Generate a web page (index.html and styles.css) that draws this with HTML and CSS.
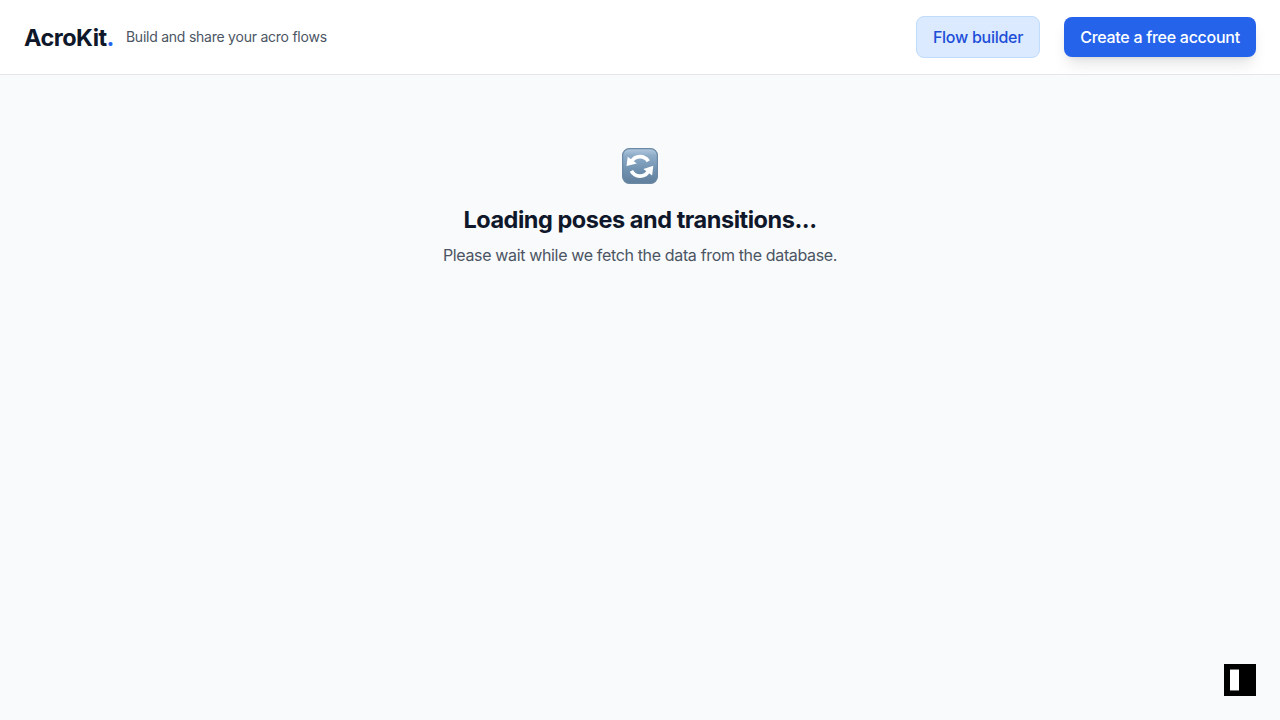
FILE: index.html
```html
<!DOCTYPE html>
<html lang="en">
<head>
<meta charset="utf-8">
<title>AcroKit</title>
<link rel="stylesheet" href="styles.css">
</head>
<body>
<header class="header">
  <div class="brand">
    <a class="logo">AcroKit<span class="logo-dot">.</span></a>
    <span class="tagline">Build and share your acro flows</span>
  </div>
  <nav class="actions">
    <a class="button button-soft"><span class="soft-label">Flow builder</span></a>
    <a class="button button-primary"><span class="primary-label">Create a free account</span></a>
  </nav>
</header>
<main class="loading">
  <svg class="refresh" viewBox="0 0 36 36" aria-hidden="true">
    <defs>
      <linearGradient id="tile" x1="0" y1="0" x2="0" y2="1">
        <stop offset="0" stop-color="#b2cae0"/>
        <stop offset=".2" stop-color="#8eacc8"/>
        <stop offset=".6" stop-color="#7192b0"/>
        <stop offset="1" stop-color="#617f9c"/>
      </linearGradient>
    </defs>
    <rect x=".6" y=".6" width="34.8" height="34.8" rx="6.8" fill="url(#tile)" stroke="#6b88a4" stroke-width="1.2"/>
    <path d="M9.5 13.6A9.7 9.7 0 0 1 26.3 13.2M26.5 23.1A9.7 9.7 0 0 1 9.4 22.9" fill="none" stroke="#fff" stroke-width="3.7"/>
    <path d="M5.7 8.8 4.5 18 14.8 15.4ZM30.1 27.4 31.3 17.8 21.4 21.1Z" fill="#fff"/>
  </svg>
  <h1 class="title">Loading poses and transitions...</h1>
  <p class="message">Please wait while we fetch the data from the database.</p>
</main>
<div class="panel-toggle"><span class="panel-bar"></span></div>
</body>
</html>
```
FILE: styles.css
```css
* { box-sizing: border-box; }
body {
  margin: 0;
  min-height: 100vh;
  background: #f9fafb;
  color: #0f172a;
  font-family: Inter, "Liberation Sans", sans-serif;
  font-size: 16px;
  line-height: 24px;
}
.header {
  display: flex;
  align-items: center;
  justify-content: space-between;
  height: 75px;
  padding: 0 24px;
  background: #fff;
  border-bottom: 1px solid #e5e7eb;
}
.brand { display: flex; align-items: center; gap: 12px; }
.logo { padding-top: 2px; font-size: 23.5px; line-height: 32px; font-weight: 700; letter-spacing: -0.53px; }
.logo-dot { color: #2563eb; }
.tagline { font-size: 14px; line-height: 20px; color: #4b5563; letter-spacing: -0.24px; }
.actions { display: flex; align-items: center; gap: 24px; }
.button {
  display: flex;
  align-items: center;
  justify-content: center;
  border-radius: 8px;
  font-weight: 450;
  white-space: nowrap;
}
.button-soft { width: 124px; height: 42px; background: #dbeafe; border: 1px solid #bfdbfe; color: #1d4ed8; }
.button-primary {
  width: 192px;
  height: 40px;
  background: #2563eb;
  color: #fff;
  box-shadow: 0 10px 15px -3px rgba(0, 0, 0, .1), 0 4px 6px -4px rgba(0, 0, 0, .1);
}
.soft-label { letter-spacing: -0.28px; }
.primary-label { letter-spacing: -0.28px; }
.loading { display: flex; flex-direction: column; align-items: center; padding-top: 73px; }
.refresh { width: 36px; height: 36px; }
.title { margin: 20px 0 7px; font-size: 23.5px; line-height: 32px; font-weight: 700; letter-spacing: -0.46px; }
.message { margin: 0; color: #4b5563; letter-spacing: -0.35px; }
.panel-toggle { position: fixed; right: 24px; bottom: 24px; width: 32px; height: 32px; padding: 5px 6px; background: #000; }
.panel-bar { display: block; width: 9px; height: 22px; background: #fff; border: solid #777; border-width: 1px 0; }
```
